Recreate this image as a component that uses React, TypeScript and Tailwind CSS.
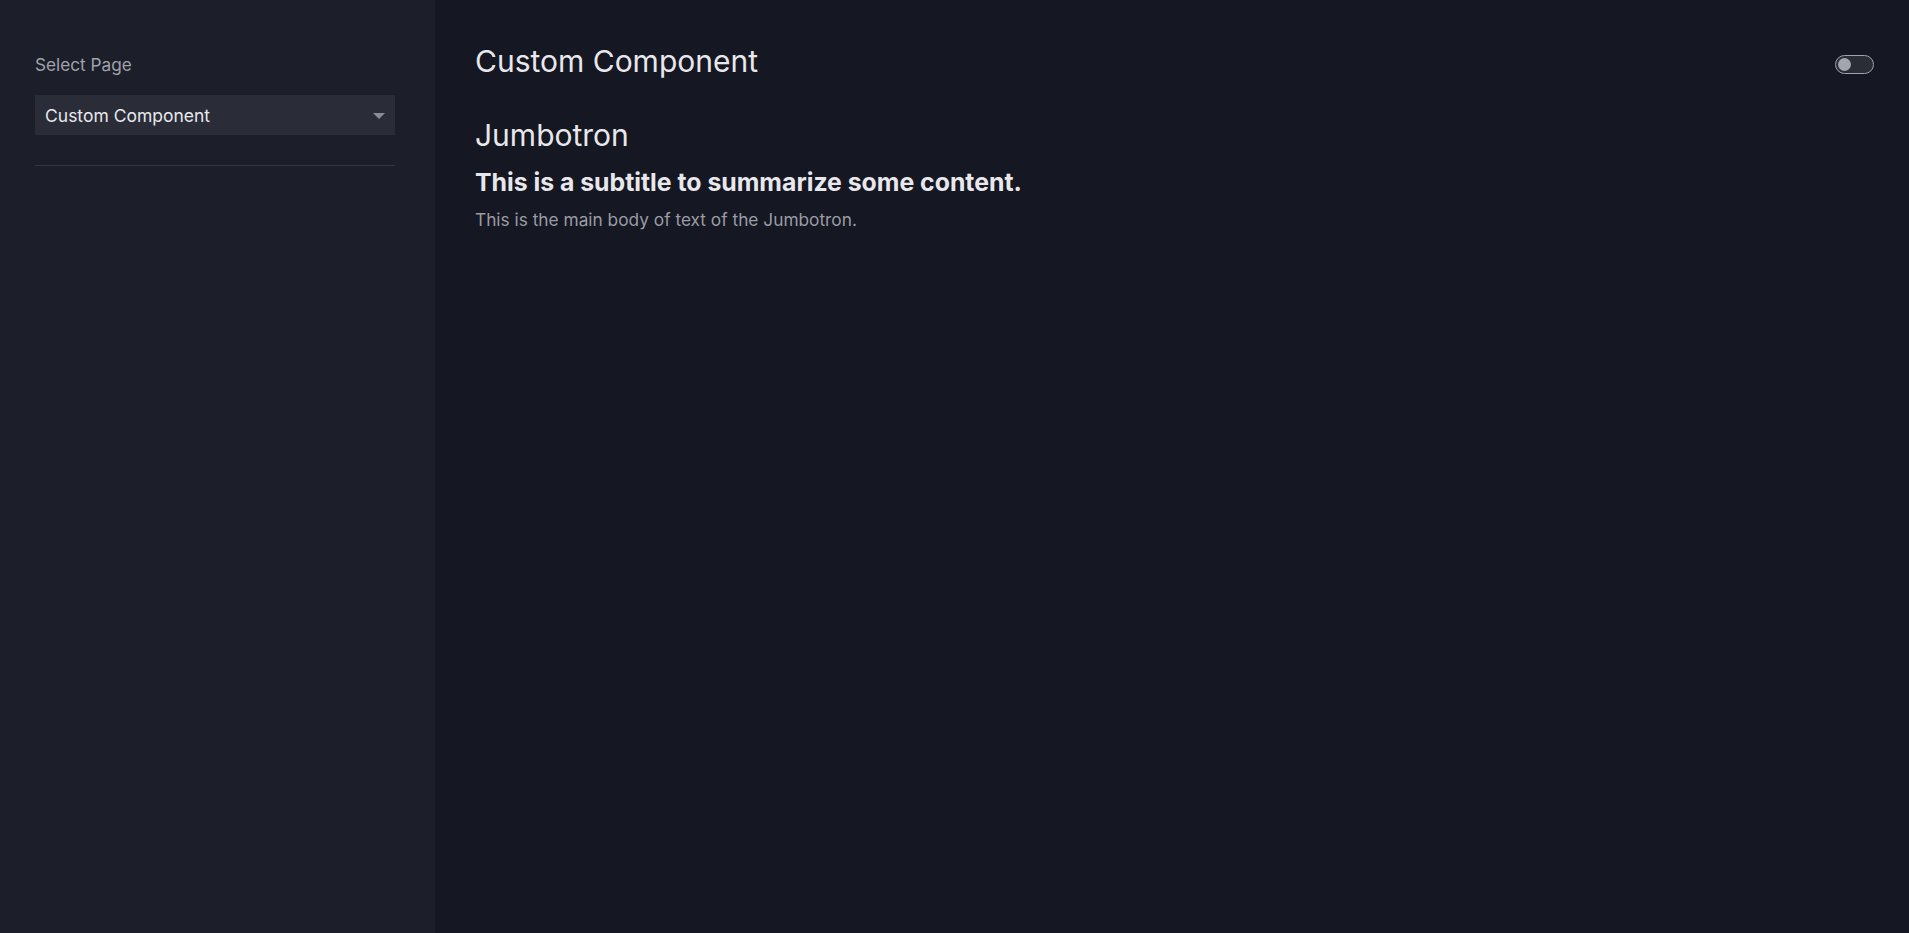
import { useState } from "react"

const PAGES = ["Custom Component", "Home", "Settings"]

export default function App() {
  const [page, setPage] = useState(PAGES[0])
  const [dark, setDark] = useState(false)

  return (
    <div className="flex h-[933px] w-full bg-[#151722] font-['Inter',sans-serif]">
      {/* ── Sidebar ─────────────────────────────────── */}
      <aside className="w-[435px] shrink-0 bg-[#1c1e2a] pl-[35px] pr-[40px] pt-[53px]">
        <label className="block text-[17.2px] leading-[24px] text-[#a0a2aa]">Select Page</label>
        <div className="relative mt-[18px] h-[40px] bg-[#2a2c38]">
          <select
            value={page}
            onChange={(e) => setPage(e.target.value)}
            className="h-full w-full appearance-none bg-transparent pl-[10px] pr-8 pt-[3px] text-[17.5px] text-[#e8e8ec] outline-none"
          >
            {PAGES.map((p) => (
              <option key={p} value={p} className="bg-[#2a2c38]">
                {p}
              </option>
            ))}
          </select>
          <svg
            className="pointer-events-none absolute right-[10px] top-[18px]"
            width="12"
            height="6"
            viewBox="0 0 12 6"
          >
            <path d="M0 0h12L6 6z" fill="#8a8c93" />
          </svg>
        </div>
        <div className="mt-[30px] h-px bg-[#323543]" />
      </aside>

      {/* ── Main ─────────────────────────────────────── */}
      <main className="flex-1 pl-[40px] pr-[35px] pt-[43px]">
        <div className="flex items-start justify-between">
          <h1 className="text-[30px] leading-[36px] text-[#e8e8ec]">Custom Component</h1>
          <button
            onClick={() => setDark(!dark)}
            className="mt-[12px] flex h-[19px] w-[39px] items-center rounded-full border-[1.5px] border-[#a0a3ad] bg-[#2a2c36] px-[2px]"
          >
            <span className="h-[13px] w-[13px] rounded-full bg-[#a3a5ad]" />
          </button>
        </div>

        <h2 className="mt-[38px] text-[30px] leading-[36px] text-[#e8e8ec]">Jumbotron</h2>
        <p className="mt-[13px] text-[24.8px] font-bold leading-[32px] text-[#e8e8ec]">
          This is a subtitle to summarize some content.
        </p>
        <p className="mt-[10px] text-[17.3px] leading-[24px] text-[#9b9ca4]">
          This is the main body of text of the Jumbotron.
        </p>
      </main>
    </div>
  )
}
